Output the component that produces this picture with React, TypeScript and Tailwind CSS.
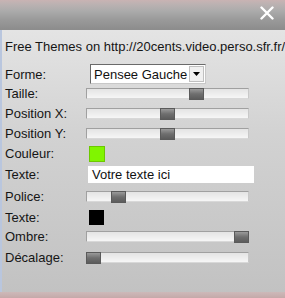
import React from "react";

function Slider({ pos }: { pos: number }) {
  return (
    <div className="relative w-[163px] h-[11px] border border-[#a0a0a0] border-b-[#d8d8d8] border-r-[#c8c8c8] bg-[linear-gradient(to_bottom,#e4e4e4,#f6f6f6)]">
      <div
        className="absolute top-[-1px] w-[15px] h-[12px] border border-[#5a5a5a] bg-[linear-gradient(to_bottom,#9a9a9a,#6e6e6e_50%,#5c5c5c)]"
        style={{ left: pos - 1 }}
      />
    </div>
  );
}

function Row({ h, label, children }: { h: number; label: string; children?: React.ReactNode }) {
  return (
    <div className="flex items-center" style={{ height: h }}>
      <div className="w-[81px] shrink-0 text-[13px] leading-none text-[#151515]">{label}</div>
      {children}
    </div>
  );
}

export default function App() {
  return (
    <div
      className="w-[285px] h-[298px] flex flex-col overflow-hidden"
      style={{ fontFamily: '"Liberation Sans", Arial, sans-serif' }}
    >
      <div className="relative h-[30px] shrink-0 bg-[linear-gradient(to_bottom,#c9b3b3_0px,#bcb2b2_4px,#ababab_11px,#9b9b9b_19px,#8d8d8d_29px)]">
        <svg className="absolute left-[260px] top-[6px]" width="14" height="14" viewBox="0 0 14 14">
          <path d="M1.5 1.5 L12.5 12.5 M12.5 1.5 L1.5 12.5" stroke="#ffffff" strokeWidth="2.4" strokeLinecap="round" />
        </svg>
      </div>
      <div className="flex-1 flex border-l-[2px] border-l-[#b9c6de] bg-[linear-gradient(to_bottom,#e4e4e4,#d2d2d2_40%,#c2c2c2)]">
        <div className="flex-1 flex flex-col pl-[3px]">
          <div className="mt-[6px] h-[20px] flex items-center text-[13px] leading-none text-[#151515] whitespace-nowrap">
            Free Themes on http://20cents.video.perso.sfr.fr/
          </div>
          <div className="mt-[8px]" />
          <Row h={20} label="Forme:">
            <div className="ml-[4px] w-[116px] h-[20px] flex items-center bg-white border border-[#6a6a6a] border-b-[#c8c8c8] border-r-[#c8c8c8]">
              <span className="pl-[3px] flex-1 text-[13px] leading-none text-[#111]">Pensee Gauche</span>
              <div className="w-[15px] h-[16px] mr-[1px] flex items-center justify-center bg-[#f0f0f0] border border-[#c0c0c0]">
                <svg width="7" height="4" viewBox="0 0 7 4">
                  <path d="M0 0 L7 0 L3.5 4 Z" fill="#000" />
                </svg>
              </div>
            </div>
          </Row>
          <Row h={19} label="Taille:">
            <Slider pos={103} />
          </Row>
          <Row h={20} label="Position X:">
            <Slider pos={74} />
          </Row>
          <Row h={20} label="Position Y:">
            <Slider pos={74} />
          </Row>
          <Row h={21} label="Couleur:">
            <div className="ml-[3px] w-[16px] h-[16px] bg-[#80f500] border border-[#6cc800]" />
          </Row>
          <Row h={20} label="Texte:">
            <div className="ml-[2px] w-[166px] h-[17px] bg-white flex items-center pl-[4px] text-[13px] leading-none text-[#111]">
              Votre texte ici
            </div>
          </Row>
          <Row h={24} label="Police:">
            <Slider pos={25} />
          </Row>
          <Row h={18} label="Texte:">
            <div className="ml-[3px] w-[15px] h-[15px] bg-black" />
          </Row>
          <Row h={21} label="Ombre:">
            <Slider pos={148} />
          </Row>
          <Row h={20} label="Décalage:">
            <Slider pos={0} />
          </Row>
        </div>
      </div>
      <div className="h-[6px] shrink-0 bg-[linear-gradient(to_bottom,#cdb9b9,#c4a9a9)]" />
    </div>
  );
}
